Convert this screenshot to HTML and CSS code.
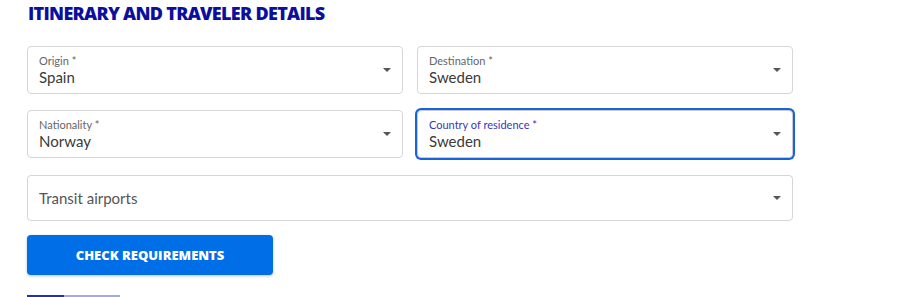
FILE: index.html
```html
<!DOCTYPE html>
<html lang="en">
<head>
    <meta charset="UTF-8">
    <meta name="viewport" content="width=device-width, initial-scale=1.0">
    <title>Itinerary and Traveler Details</title>
    <link rel="stylesheet" href="styles.css">
</head>
<body>

    <div class="page">
        <h1>Itinerary and traveler details</h1>

        <div class="field-grid">
            <div class="field">
                <span class="field-label">Origin *</span>
                <span class="field-value">Spain</span>
                <span class="arrow"></span>
            </div>
            <div class="field">
                <span class="field-label">Destination *</span>
                <span class="field-value">Sweden</span>
                <span class="arrow"></span>
            </div>
            <div class="field">
                <span class="field-label">Nationality *</span>
                <span class="field-value">Norway</span>
                <span class="arrow"></span>
            </div>
            <div class="field focused">
                <span class="field-label">Country of residence *</span>
                <span class="field-value">Sweden</span>
                <span class="arrow"></span>
            </div>
        </div>

        <div class="field transit">
            <span class="placeholder">Transit airports</span>
            <span class="arrow"></span>
        </div>

        <button class="check-btn">Check requirements</button>

        <div class="progress">
            <span class="progress-done"></span>
            <span class="progress-rest"></span>
        </div>
    </div>

</body>
</html>
```

FILE: styles.css
```css
body {
    margin: 0;
    font-family: Lato, "Open Sans", sans-serif;
    color: #333;
    background-color: #fff;
    overflow: hidden;
}

.page {
    width: 766px;
    padding: 3px 0 0 27px;
}

h1 {
    margin: 0 0 22px 1px;
    font-family: "Open Sans", Arial, sans-serif;
    font-size: 18px;
    font-weight: 800;
    text-transform: uppercase;
    letter-spacing: -0.7px;
    color: #0b0f9c;
    line-height: 21px;
}

.field-grid {
    display: grid;
    grid-template-columns: 1fr 1fr;
    column-gap: 14px;
    row-gap: 16px;
}

.field {
    position: relative;
    display: flex;
    flex-direction: column;
    height: 48px;
    padding: 7px 11px 0;
    border: 1px solid #d6d6d6;
    border-radius: 4px;
    box-sizing: border-box;
    background-color: #fff;
}

.field.focused {
    border-color: #c8c8d8;
    box-shadow: 0 0 0 2px #1664d8;
}

.field-label {
    font-size: 11px;
    line-height: 14px;
    color: #666;
}

.focused .field-label {
    color: #3a36b8;
}

.field-value {
    font-size: 15px;
    line-height: 18px;
    margin-top: 0;
    color: #3a3a3a;
}

.arrow {
    position: absolute;
    right: 11px;
    top: 21px;
    width: 0;
    height: 0;
    border-left: 4px solid transparent;
    border-right: 4px solid transparent;
    border-top: 4px solid #555;
}

.transit {
    height: 46px;
    margin-top: 17px;
    justify-content: center;
    padding-top: 0;
}

.transit .arrow {
    top: 20px;
}

.placeholder {
    font-size: 15px;
    color: #555;
}

.check-btn {
    display: block;
    width: 246px;
    height: 40px;
    margin-top: 14px;
    border: none;
    border-radius: 4px;
    background-color: #006ee6;
    color: #fff;
    font-family: "Open Sans", Arial, sans-serif;
    font-size: 13px;
    font-weight: 800;
    text-transform: uppercase;
    box-shadow: 0 1px 3px rgba(0, 0, 0, 0.25);
    cursor: pointer;
}

.progress {
    display: flex;
    width: 93px;
    height: 3px;
    margin-top: 20px;
}

.progress-done {
    width: 37px;
    background-color: #1d2bd1;
}

.progress-rest {
    flex: 1;
    background-color: #9ea6f5;
}
```
